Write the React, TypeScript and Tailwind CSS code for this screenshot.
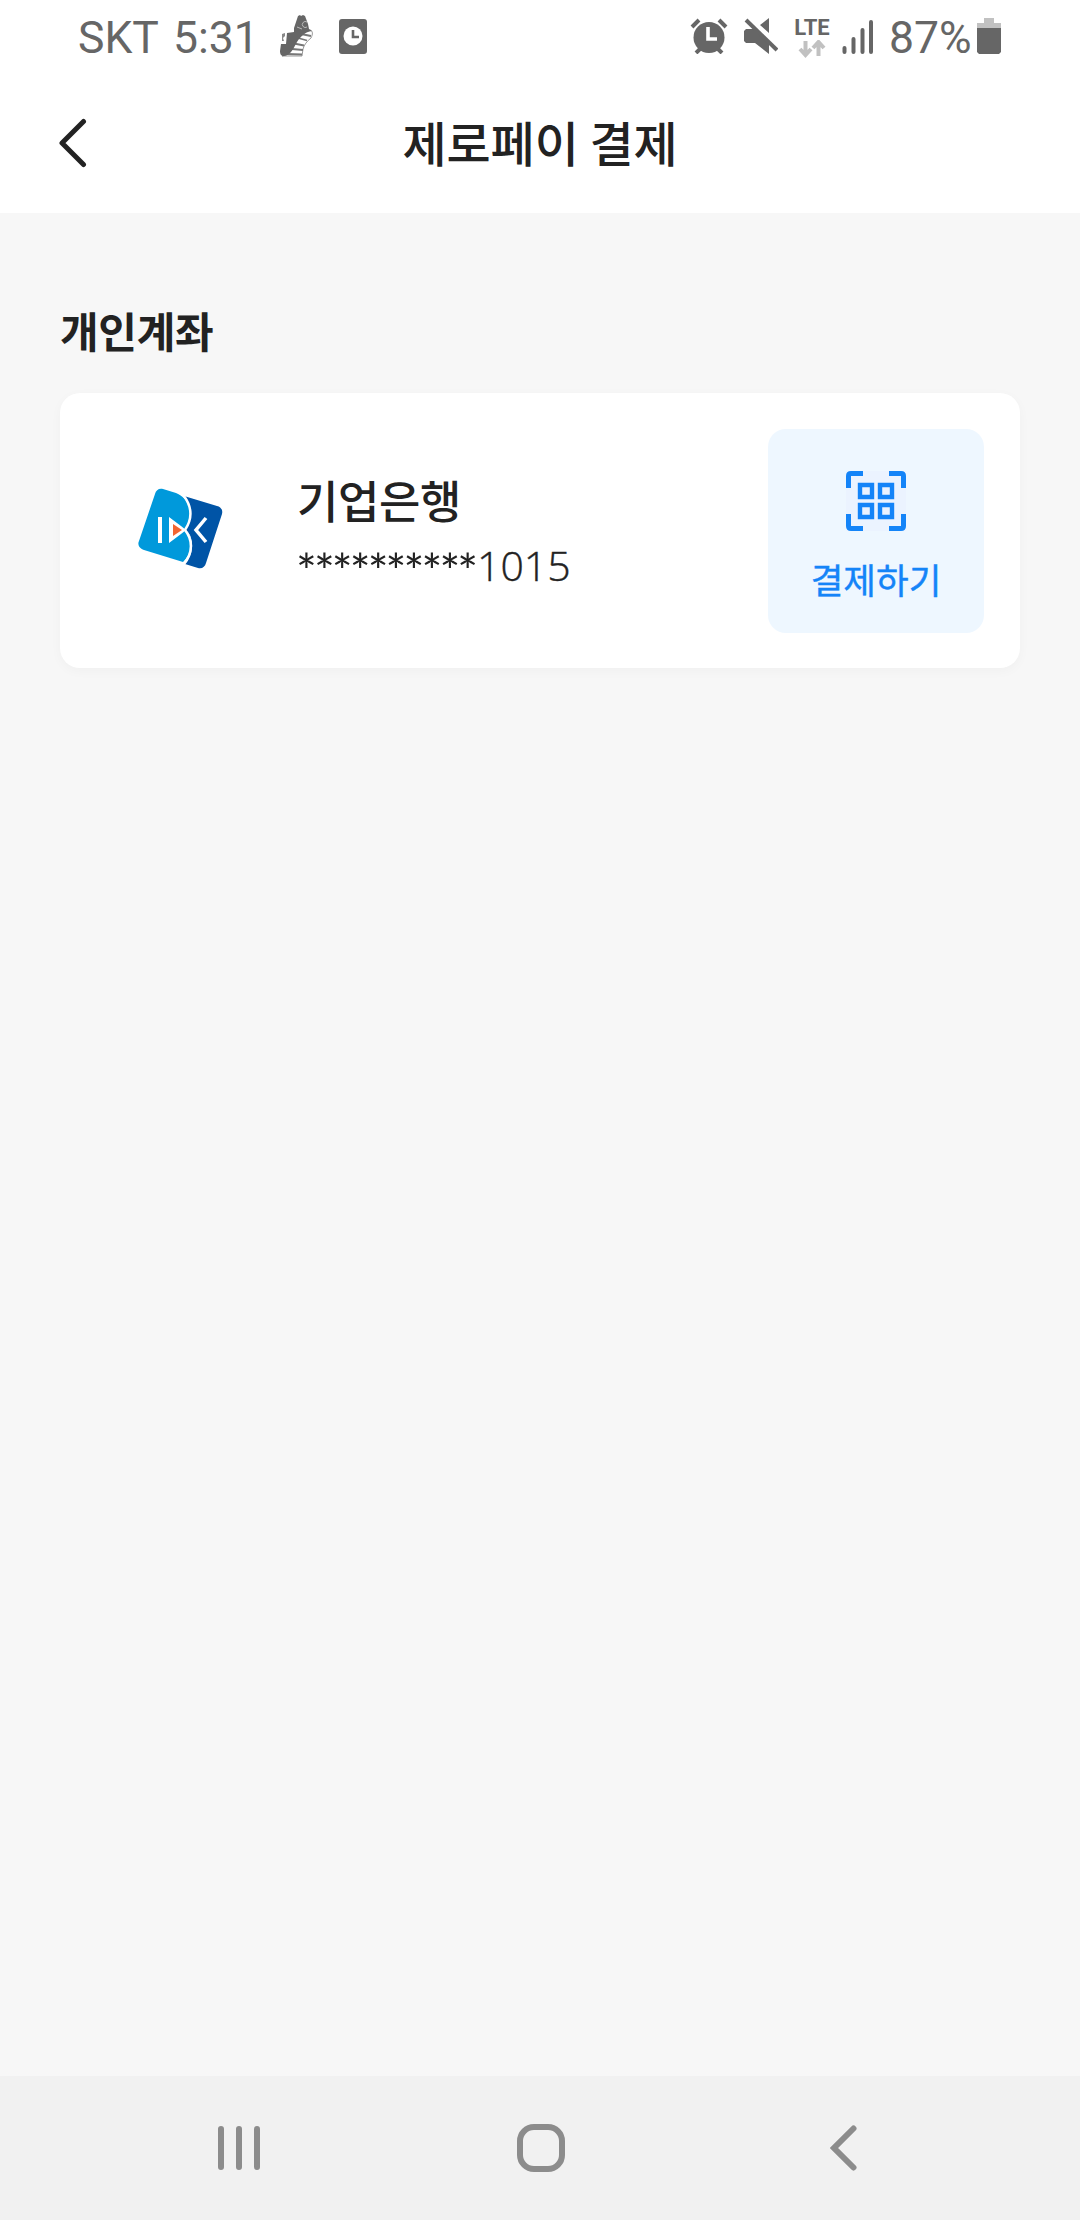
import React from 'react';

const StatusBar: React.FC = () => {
  return (
    <div className="flex h-[75px] items-start justify-between bg-white pl-[78px] pr-[79px] font-[Roboto,sans-serif] text-[#666666]">
      <div className="flex items-start">
        <span className="mt-[12px] w-[177px] whitespace-nowrap text-[44.5px] leading-[53px] [word-spacing:4px]">SKT 5:31</span>
        {/* step counter shoe */}
        <svg className="ml-[19px] mt-[10px] h-[52px] w-[44px]" viewBox="0 0 44 52" fill="none">
          <path d="M8 46c7-1 8-6 12-12 5-8 9-12 16-14 3 1 3 4 1 8-4 3-7 7-8 11l-1 7z" fill="#fff" stroke="#999" strokeWidth="1" />
          <path d="M27 24l10 2M24 28l9 2.500M20 33.500l10 2M18 39l11 1M13 44l15 .500" stroke="#777" strokeWidth="1.800" />
          <path d="M24 6l2-1 1 1 2-1 2 1 3 8 1 5 3 2c-7 1-11 5-15 11-4 7-6 13-13 14-3 0-4-2-4-5l1-7h5l1-11 7-1v-4z" fill="#666" />
          <path d="M8 24l3-1v3l-2 2 1 3H8z" fill="#888" />
          <path d="M33 12a3 3 0 1 0 0 5M23 17l5 2" stroke="#bbb" strokeWidth="1" />
        </svg>
        <svg className="ml-[20px] mt-[18px] h-[36px] w-[30px]" viewBox="0 0 30 36" fill="none">
          <rect x="1" y="1" width="28" height="35" rx="3" fill="#666" />
          <circle cx="15" cy="18" r="9.5" fill="#fff" />
          <path d="M15 12v7h6" stroke="#666" strokeWidth="2.6" />
        </svg>
      </div>
      <div className="flex items-start">
        <svg className="mt-[18px] h-[36px] w-[38px]" viewBox="0 0 38 36" fill="none">
          <path d="M2 9l7-7M36 9l-7-7M6 35l6-6M32 35l-6-6" stroke="#666" strokeWidth="4" />
          <circle cx="19" cy="19.5" r="15.5" fill="#666" />
          <path d="M18 9v12h9" stroke="#fff" strokeWidth="3.6" />
        </svg>
        <svg className="ml-[16px] mt-[18px] h-[36px] w-[34px]" viewBox="0 0 34 36">
          <path d="M0 13l2-2h9l14 14v11L11 25H2l-2-2zM25 0v15l-9-8z" fill="#666" />
          <path d="M4 0l30 30" stroke="#fff" strokeWidth="3" />
          <path d="M2 2l31 30" stroke="#666" strokeWidth="4" />
        </svg>
        <div className="ml-[16px] mt-[18px] flex w-[36px] flex-col items-center">
          <span className="text-[22px] font-bold leading-[19px]">LTE</span>
          <svg className="mt-[3px] h-[18px] w-[28px]" viewBox="0 0 28 18" fill="none" stroke="#c1c1c1" strokeWidth="4">
            <path d="M7.500 1v13M2 9l5.500 6L13 9M20.500 16V3M15 8l5.500-6L26 8" />
          </svg>
        </div>
        <svg className="ml-[12px] mt-[20px] h-[34px] w-[31px]" viewBox="0 0 31 34" stroke="#666" strokeWidth="4" strokeLinecap="round">
          <path d="M2.500 28v4M11.500 19v13M20.500 10v22M29 2v30" />
        </svg>
        <span className="ml-[16px] mt-[12px] w-[88px] whitespace-nowrap text-[44.5px] leading-[53px]">87%</span>
        <svg className="mt-[18px] h-[36px] w-[24px]" viewBox="0 0 24 36">
          <path d="M7 0h10v5h7v6H0V5h7z" fill="#c1c1c1" />
          <path d="M0 10h24v24l-2 2H2l-2-2z" fill="#666" />
        </svg>
      </div>
    </div>
  );
};

const Header: React.FC = () => {
  return (
    <header className="grid h-[138px] grid-cols-[1fr_auto_1fr] items-start bg-white pl-[58px] pr-[58px]">
      <svg className="mt-[43px] h-[50px] w-[30px]" viewBox="0 0 30 50" fill="none" stroke="#222" strokeWidth="5" strokeLinecap="round" strokeLinejoin="round">
        <path d="M25.500 3.500L4 25l21.500 21.500" />
      </svg>
      <h1 className="mt-[31px] whitespace-nowrap text-[48px] font-medium leading-[70px] tracking-[-0.1px]">제로페이 결제</h1>
    </header>
  );
};

const BankLogo: React.FC = () => {
  return (
    <svg className="h-[120px] w-[120px]" viewBox="0 0 120 120">
      <path d="M43 19l13 4c8 3 14 11 14 20 0 7-2 11-5 16 5 5 7 11 6 18-1 6-4 11-8 15l-39-12c-4-1-7-5-5-9l16-47c1-4 4-6 8-5z" fill="#0099db" />
      <path d="M64 26l33 10c4 1 6 4 5 8L86 93c-1 4-4 6-8 5l-13-4c6-7 9-17 6-26-1-4-3-6-6-9 8-11 8-22-1-33z" fill="#0054a6" />
      <path d="M64 26c8 11 9 22 1 34 8 10 8 23-1 34" fill="none" stroke="#fff" strokeWidth="2.500" />
      <path d="M38 47h4v26h-4zM49 47l12 9 5 4-5 4-12 9z" fill="#fff" />
      <path d="M53 54l9 6-9 6z" fill="#f26531" />
      <path d="M86 48L76 60l10 12" fill="none" stroke="#fff" strokeWidth="3.500" />
    </svg>
  );
};

const PayButton: React.FC = () => {
  return (
    <button className="flex h-[204px] w-[216px] flex-col items-center rounded-[18px] bg-[#eef7ff] pt-[42px] text-[#1484f8]">
      <svg className="h-[60px] w-[60px]" viewBox="0 0 60 60" fill="none" stroke="currentColor">
        <path d="M0 0h60v60H0z" fill="#ebf3ff" stroke="none" />
        <path d="M17 2.500H5Q2.500 2.500 2.500 5v12M43 2.500h12q2.500 0 2.500 2.500v12M17 57.500H5Q2.500 57.500 2.500 55V43M43 57.500h12q2.500 0 2.500-2.500V43" strokeWidth="5" />
        <path d="M14 14h12v12H14zM34 14h12v12H34zM14 34h12v12H14zM34 34h12v12H34z" strokeWidth="4.400" />
      </svg>
      <span className="mt-[22px] text-[35.5px] leading-[52px] [-webkit-text-stroke:0.4px_currentColor]">결제하기</span>
    </button>
  );
};

const AccountCard: React.FC = () => {
  return (
    <div className="flex h-[275px] items-start rounded-[20px] bg-white pl-[60px] pr-[36px] pt-[36px] shadow-[0_3px_12px_rgba(0,0,0,0.03)]">
      <div className="mt-[41px]">
        <BankLogo />
      </div>
      <div className="ml-[57px] mt-[38px] flex-1">
        <p className="text-[45px] font-medium leading-[66px] tracking-[-0.4px]">기업은행</p>
        <p className="flex leading-[62px]">
          <span className="-ml-px mt-[6px] w-[181px] whitespace-nowrap font-[Lato,sans-serif] text-[49px] tracking-[-2.9px]">**********</span>
          <span className="mt-px font-['Open_Sans',sans-serif] text-[41px] font-light [-webkit-text-stroke:0.4px_currentColor]">1015</span>
        </p>
      </div>
      <PayButton />
    </div>
  );
};

const NavBar: React.FC = () => {
  return (
    <nav className="flex h-[144px] items-start bg-[#f1f1f1] pl-[217px] pt-[48px] text-[#8c8c8c]">
      <svg className="h-[48px] w-[44px]" viewBox="0 0 44 48" stroke="currentColor" strokeWidth="6" strokeLinecap="round">
        <path d="M4 5v38M22 5v38M40 5v38" />
      </svg>
      <svg className="ml-[256px] h-[48px] w-[48px]" viewBox="0 0 48 48" fill="none" stroke="currentColor" strokeWidth="6">
        <rect x="3" y="3" width="42" height="42" rx="14" />
      </svg>
      <svg className="ml-[265px] h-[48px] w-[30px]" viewBox="0 0 30 48" fill="none" stroke="currentColor" strokeWidth="6" strokeLinecap="round">
        <path d="M23.500 4.500L4 24l19.500 19.500" />
      </svg>
    </nav>
  );
};

export default function App() {
  return (
    <div className="flex h-[2220px] w-[1080px] flex-col bg-[#f7f7f7] font-['Noto_Sans_CJK_KR',sans-serif] text-[#222222]">
      <StatusBar />
      <Header />
      <main className="flex-1 px-[60px] pt-[86px]">
        <h2 className="h-[94px] text-[42px] font-bold leading-[62px] tracking-[-0.3px]">개인계좌</h2>
        <AccountCard />
      </main>
      <NavBar />
    </div>
  );
}
